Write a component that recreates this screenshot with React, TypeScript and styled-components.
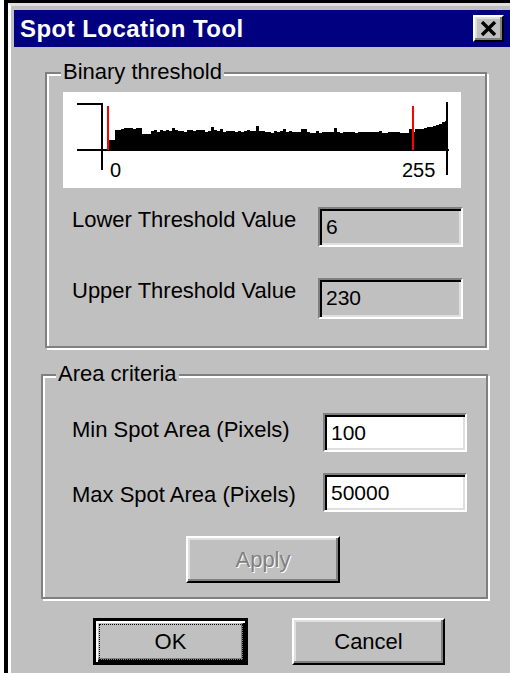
import * as React from "react"
import styled, { createGlobalStyle } from "styled-components"

const GlobalStyle = createGlobalStyle`
  html, body {
    margin: 0;
    padding: 0;
    background: #fff;
    overflow: hidden;
  }
  body {
    font-family: "Liberation Sans", Arial, sans-serif;
    color: #000;
  }
`

const Window = styled.div`
  margin-left: 4px;
  height: 673px;
  border-top: 3px solid #000;
  border-left: 4px solid #000;
  background: #c0c0c0;
  box-sizing: border-box;
`

const Frame = styled.div`
  height: 100%;
  border-top: 3px solid #dfdfdf;
  border-left: 3px solid #fff;
  padding: 4px 0 0 3px;
  box-sizing: border-box;
`

const TitleBar = styled.div`
  height: 37px;
  background: #000080;
  display: flex;
  align-items: center;
  padding-left: 6px;
`

const Title = styled.span`
  color: #fff;
  font-weight: bold;
  font-size: 24px;
  letter-spacing: 0.45px;
`

const CloseButton = styled.div`
  margin-left: auto;
  margin-right: 6px;
  width: 31px;
  height: 27px;
  box-sizing: border-box;
  background: #c0c0c0;
  border: 2px solid;
  border-color: #fff #000 #000 #fff;
  box-shadow: inset -2px -2px #808080, inset 2px 2px #dfdfdf;
  display: flex;
  align-items: center;
  justify-content: center;
`

const Group = styled.div<{ $left: number; $width: number; $height: number; $top: number }>`
  position: relative;
  box-sizing: border-box;
  margin-left: ${(p) => p.$left}px;
  margin-top: ${(p) => p.$top}px;
  width: ${(p) => p.$width}px;
  height: ${(p) => p.$height}px;
  border: 2px solid #808080;
  box-shadow: 2px 2px 0 #fff, inset 2px 2px 0 #fff;
`

const GroupBody = styled.div<{ $padTop: number; $padLeft: number }>`
  padding: ${(p) => p.$padTop}px 0 0 ${(p) => p.$padLeft}px;
`

// caption sitting on the etched top line
const Legend = styled.span<{ $left: number }>`
  position: absolute;
  top: -14px;
  left: ${(p) => p.$left}px;
  padding: 0 2px;
  background: #c0c0c0;
  font-size: 22px;
  line-height: 24px;
`

const HistBox = styled.div`
  width: 398px;
  height: 96px;
  background: #fff;
`

const Fields = styled.div<{ $label: number; $gap: number; $left: number; $top: number }>`
  display: grid;
  grid-template-columns: ${(p) => p.$label}px auto;
  row-gap: ${(p) => p.$gap}px;
  margin: ${(p) => p.$top}px 0 0 ${(p) => p.$left}px;
  align-items: start;
`

const Label = styled.div<{ $drop: number }>`
  font-size: 22px;
  line-height: 25px;
  padding-top: ${(p) => p.$drop}px;
  white-space: nowrap;
`

const Edit = styled.div<{ $readOnly?: boolean; $w: number; $h: number }>`
  box-sizing: border-box;
  width: ${(p) => p.$w}px;
  height: ${(p) => p.$h}px;
  background: ${(p) => (p.$readOnly ? "#c0c0c0" : "#fff")};
  border: 2px solid;
  border-color: #808080 #fff #fff #808080;
  box-shadow: inset 2px 2px #000, inset -2px -2px #dfdfdf;
  font-size: 21px;
  padding: 5px 0 0 6px;
  line-height: 26px;
`

const Button = styled.div<{ $w: number; $disabled?: boolean; $default?: boolean }>`
  box-sizing: border-box;
  width: ${(p) => p.$w}px;
  height: 47px;
  background: #c0c0c0;
  border: 2px solid;
  border-color: #fff #000 #000 #fff;
  box-shadow: inset -2px -2px #808080, inset 2px 2px #dfdfdf;
  display: flex;
  align-items: center;
  justify-content: center;
  font-size: 22px;
  color: ${(p) => (p.$disabled ? "#808080" : "#000")};
  text-shadow: ${(p) => (p.$disabled ? "1px 1px 0 #fff" : "none")};
  ${(p) =>
    p.$default &&
    `
    border: 3px solid #000;
    box-shadow: inset 2px 2px #fff, inset -2px -2px #000, inset -4px -4px #808080;
  `}
`

const Focus = styled.div`
  position: absolute;
  inset: 6px 5px 5px 6px;
  border: 1px dotted #000;
`

const DefaultWrap = styled.div`
  position: relative;
  display: flex;
`

const ApplyRow = styled.div`
  margin: 24px 0 0 143px;
`

const Buttons = styled.div`
  display: flex;
  gap: 44px;
  margin: 19px 0 0 79px;
`

function hash(n: number) {
  const s = Math.sin(n * 12.9898) * 43758.5453
  return s - Math.floor(s)
}

function histTop(x: number) {
  if (x < 50) return 48
  if (x < 77) return 36 + Math.round(hash(x) * 2)
  if (x < 87) return 42
  if (x < 350) {
    const base = 39 + (x > 200 ? 1 : 0)
    let t = base + (hash(x) - 0.5) * 2
    if (hash(x + 99) > 0.86) t -= 2 + hash(x + 7) * 3
    return Math.round(t)
  }
  // tail rises towards 255
  const k = (x - 350) / 34
  return Math.round(37 - k * k * 9)
}

function Histogram() {
  let d = "M46,58"
  for (let x = 46; x < 384; x += 3) {
    const t = histTop(x)
    d += ` L${x},${t} L${Math.min(x + 3, 384)},${t}`
  }
  d += " L384,58 Z"
  return (
    <svg width="398" height="96" viewBox="0 0 398 96">
      <path d={d} fill="#000" />
      <g stroke="#000" strokeWidth="2" fill="none">
        <path d="M14,12 H39 V78" />
        <path d="M14,58 H386" />
        <path d="M384,10 V83" />
      </g>
      <g stroke="#f00" strokeWidth="2">
        <line x1="45" y1="14" x2="45" y2="58" />
        <line x1="350" y1="14" x2="350" y2="58" />
      </g>
      <g fontFamily="Liberation Sans, Arial, sans-serif" fontSize="20" fill="#000">
        <text x="47" y="85">0</text>
        <text x="339" y="85">255</text>
      </g>
    </svg>
  )
}

export default function App() {
  return (
    <>
      <GlobalStyle />
      <Window>
        <Frame>
          <TitleBar>
            <Title>Spot Location Tool</Title>
            <CloseButton>
              <svg width="17" height="15" viewBox="0 0 17 15">
                <path d="M2,1 L15,14 M15,1 L2,14" stroke="#000" strokeWidth="3.4" />
              </svg>
            </CloseButton>
          </TitleBar>

          <Group $left={31} $top={25} $width={442} $height={276}>
            <Legend $left={14}>Binary threshold</Legend>
            <GroupBody $padTop={18} $padLeft={16}>
              <HistBox>
                <Histogram />
              </HistBox>
            </GroupBody>
            <Fields $label={246} $gap={31} $left={25} $top={19}>
              <Label $drop={0}>Lower Threshold Value</Label>
              <Edit $readOnly $w={145} $h={40}>6</Edit>
              <Label $drop={0}>Upper Threshold Value</Label>
              <Edit $readOnly $w={145} $h={41}>230</Edit>
            </Fields>
          </Group>

          <Group $left={27} $top={26} $width={447} $height={225}>
            <Legend $left={13}>Area criteria</Legend>
            <Fields $label={251} $gap={21} $left={29} $top={37}>
              <Label $drop={4}>Min Spot Area (Pixels)</Label>
              <Edit $w={144} $h={39}>100</Edit>
              <Label $drop={9}>Max Spot Area (Pixels)</Label>
              <Edit $w={144} $h={39}>50000</Edit>
            </Fields>
            <ApplyRow>
              <Button $w={154} $disabled>Apply</Button>
            </ApplyRow>
          </Group>

          <Buttons>
            <DefaultWrap>
              <Button $w={155} $default>OK</Button>
              <Focus />
            </DefaultWrap>
            <Button $w={153}>Cancel</Button>
          </Buttons>
        </Frame>
      </Window>
    </>
  )
}
